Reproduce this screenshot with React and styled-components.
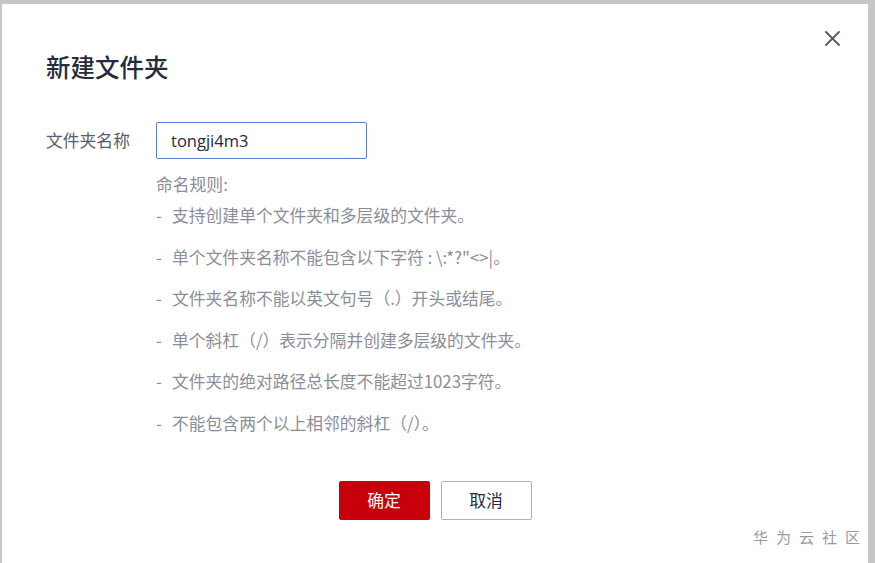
import React from "react";
import styled, { createGlobalStyle } from "styled-components";

const GlobalStyle = createGlobalStyle`
  html, body {
    margin: 0;
    height: 100%;
    background: #c6c6c6;
    font-family: "Noto Sans CJK SC", "Noto Sans", sans-serif;
    overflow: hidden;
  }
  #root {
    height: 100%;
  }
`;

const rules = [
  "支持创建单个文件夹和多层级的文件夹。",
  "单个文件夹名称不能包含以下字符 : \\:*?\"<>|。",
  "文件夹名称不能以英文句号（.）开头或结尾。",
  "单个斜杠（/）表示分隔并创建多层级的文件夹。",
  "文件夹的绝对路径总长度不能超过1023字符。",
  "不能包含两个以上相邻的斜杠（/）。",
];

const App = () => {
  return (
    <>
      <GlobalStyle />
      <Page>
        <Dialog>
          <CloseButton aria-label="关闭">
            <svg width="17" height="17" viewBox="0 0 17 17">
              <path d="M2 2L15 15M15 2L2 15" stroke="#555b66" strokeWidth="1.9" strokeLinecap="round" />
            </svg>
          </CloseButton>
          <Title>新建文件夹</Title>
          <FormRow>
            <Label>文件夹名称</Label>
            <Field>
              <Input defaultValue="tongji4m3" />
              <Rules>
                <RulesHead>命名规则:</RulesHead>
                <RuleList>
                  {rules.map((r) => (
                    <Rule key={r}>
                      <Dash>-</Dash>
                      {r}
                    </Rule>
                  ))}
                </RuleList>
              </Rules>
            </Field>
          </FormRow>
          <Footer>
            <Button $primary>确定</Button>
            <Button>取消</Button>
          </Footer>
          <Watermark>华为云社区</Watermark>
        </Dialog>
      </Page>
    </>
  );
};

export default App;

const Page = styled.div`
  height: 100%;
  padding: 4px 7px 0 2px;
  box-sizing: border-box;
`;

const Dialog = styled.div`
  position: relative;
  height: 100%;
  background: #fff;
  padding: 48px 0 0 44px;
  box-sizing: border-box;
`;

const CloseButton = styled.button`
  position: absolute;
  top: 26px;
  right: 27px;
  width: 17px;
  height: 17px;
  padding: 0;
  border: 0;
  background: none;
  display: flex;
`;

const Title = styled.h2`
  margin: 0;
  font-size: 24.5px;
  line-height: 30px;
  font-weight: 500;
  color: #252b3a;
`;

const FormRow = styled.div`
  display: flex;
  margin-top: 40px;
`;

const Label = styled.div`
  width: 110px;
  font-size: 16.8px;
  line-height: 37px;
  color: #575d6c;
`;

const Field = styled.div`
  display: flex;
  flex-direction: column;
`;

const Input = styled.input`
  width: 211px;
  height: 37px;
  box-sizing: border-box;
  border: 1px solid #5e7ce0;
  border-radius: 2px;
  padding: 0 14px;
  font-family: "Open Sans", "Noto Sans", sans-serif;
  font-size: 16.5px;
  color: #252b3a;
  outline: none;
`;

const Rules = styled.div`
  margin-top: 13px;
  color: #8a8e99;
  font-size: 16.8px;
  line-height: 24px;
`;

const RulesHead = styled.div``;

const RuleList = styled.ul`
  list-style: none;
  margin: 7px 0 0;
  padding: 0;
  display: flex;
  flex-direction: column;
  gap: 17.5px;
`;

const Rule = styled.li`
  display: flex;
  white-space: nowrap;
`;

const Dash = styled.span`
  width: 16px;
  flex: none;
`;

const Footer = styled.div`
  display: flex;
  justify-content: center;
  gap: 11px;
  margin: 46px 0 0 -44px;
`;

const Button = styled.button`
  width: 91px;
  height: 39px;
  border-radius: 2px;
  font-family: "Noto Sans CJK SC", sans-serif;
  font-size: 16.8px;
  cursor: pointer;
  border: 1px solid ${(p) => (p.$primary ? "#c7000b" : "#adb0b8")};
  background: ${(p) => (p.$primary ? "#c7000b" : "#fff")};
  color: ${(p) => (p.$primary ? "#fff" : "#252b3a")};
`;

const Watermark = styled.div`
  position: absolute;
  right: 0;
  top: 522px;
  font-size: 15px;
  letter-spacing: 8px;
  color: #9a9a9a;
`;
